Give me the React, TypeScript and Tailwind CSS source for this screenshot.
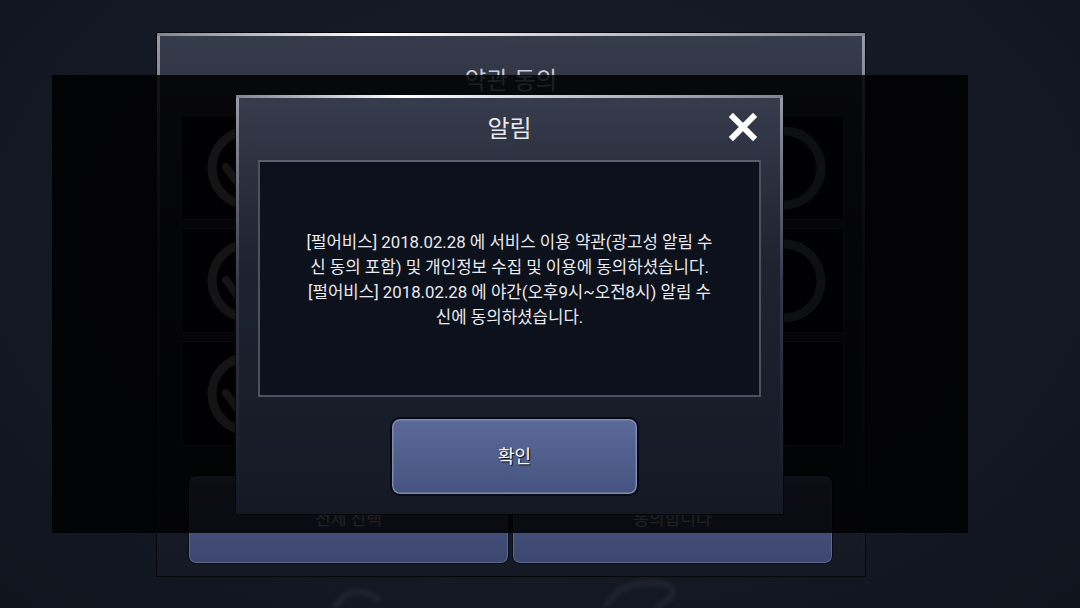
import React from "react";

function Ring({ tick, tone }: { tick?: boolean; tone: string }) {
  return (
    <svg width="84" height="84" viewBox="0 0 84 84" fill="none" className="shrink-0">
      <circle cx="42" cy="42" r="37" stroke={tone} strokeWidth="9" />
      {tick && <path d="M19 41 L33 60" stroke={tone} strokeWidth="8" strokeLinecap="round" />}
    </svg>
  );
}

function Row({ rightRing }: { rightRing: boolean }) {
  return (
    <div className="h-[105px] border border-[#3d414c] bg-[#0a0d15] flex items-center justify-between pl-[25px] pr-[17px]">
      <Ring tick tone="#84848a" />
      {rightRing && <Ring tone="#5d6470" />}
    </div>
  );
}

function Frame({ className, children }: { className: string; children: React.ReactNode }) {
  return (
    <div className={`relative border border-[#05070b] p-[3px] bg-gradient-to-b from-[#9a9eaa] via-[#33384a] via-45% to-[#141823] ${className}`}>
      <div className="absolute left-0 right-0 top-0 h-[3px] bg-gradient-to-r from-[#7f8492] via-[#ffffff] via-30% to-[#7f8492]" />
      <div className="w-full h-full bg-gradient-to-b from-[#363c4c] via-[#1e2330] via-40% to-[#141924] flex flex-col">
        {children}
      </div>
    </div>
  );
}

function SmallButton({ label }: { label: string }) {
  return (
    <button className="w-[321px] h-[89px] rounded-[8px] border border-[#080b18] bg-gradient-to-b from-[#66779f] via-[#4d5a84] via-10% to-[#3c4670] shadow-[inset_0_0_0_1px_#5f6988] text-[#d8dbe4] text-[17px]">
      {label}
    </button>
  );
}

export default function App() {
  return (
    <div
      className="relative w-[1080px] h-[608px] overflow-hidden bg-[radial-gradient(ellipse_at_50%_40%,#181d2a_0%,#141925_60%,#10141d_100%)] pt-[32px] pl-[156px]"
      style={{ fontFamily: 'Roboto, "Noto Sans CJK KR", sans-serif' }}
    >
      <svg className="absolute left-[320px] top-[570px] blur-[2px]" width="400" height="38" viewBox="0 0 400 38" fill="none">
        <path d="M15 38 Q30 10 60 30 M285 38 Q300 8 345 14 Q365 22 335 38" stroke="#1f2430" strokeWidth="6" />
      </svg>

      <Frame className="w-[710px] h-[545px]">
        <div className="h-[79px] pt-[25px] text-center text-[23.5px] leading-[40px] text-[#c9ccd4]">약관 동의</div>
        <div className="flex flex-col gap-[8px] pl-[21px] pr-[18px]">
          <Row rightRing />
          <Row rightRing />
          <Row rightRing={false} />
        </div>
        <div className="flex gap-[3px] pl-[28px] mt-[29px]">
          <SmallButton label="전체 선택" />
          <SmallButton label="동의합니다" />
        </div>
      </Frame>

      <div className="absolute left-[52px] top-[75px] w-[916px] h-[458px] bg-black/85 pt-[19px] pl-[183px]">
        <Frame className="w-[549px] h-[421px]">
          <div className="relative h-[62px] pt-[2px] text-center text-[24px] leading-[58px] text-[#e6e8ee]">
            알림
            <svg className="absolute left-[488px] top-[13px]" width="32" height="32" viewBox="0 0 32 32" fill="none">
              <path d="M6 6 L26 26 M26 6 L6 26" stroke="#ffffff" strokeWidth="6" strokeLinecap="square" />
            </svg>
          </div>
          <div className="mx-[19px] h-[237px] pt-[2px] border-2 border-[#4c5160] border-t-[#5b6070] bg-[#0d111b] flex flex-col items-center justify-center text-[16.8px] leading-[25px] text-[#e8eaef]">
            <p>[펄어비스] 2018.02.28 에 서비스 이용 약관(광고성 알림 수</p>
            <p>신 동의 포함) 및 개인정보 수집 및 이용에 동의하셨습니다.</p>
            <p>[펄어비스] 2018.02.28 에 야간(오후9시~오전8시) 알림 수</p>
            <p>신에 동의하셨습니다.</p>
          </div>
          <button className="mt-[20px] ml-[151px] w-[249px] h-[79px] rounded-[10px] border-2 border-[#070a14] bg-gradient-to-b from-[#5c6a9a] to-[#465380] shadow-[inset_0_0_0_1.5px_#7f8bac] text-[18px] text-white [text-shadow:1px_1px_1px_#000]">
            확인
          </button>
        </Frame>
      </div>
    </div>
  );
}
